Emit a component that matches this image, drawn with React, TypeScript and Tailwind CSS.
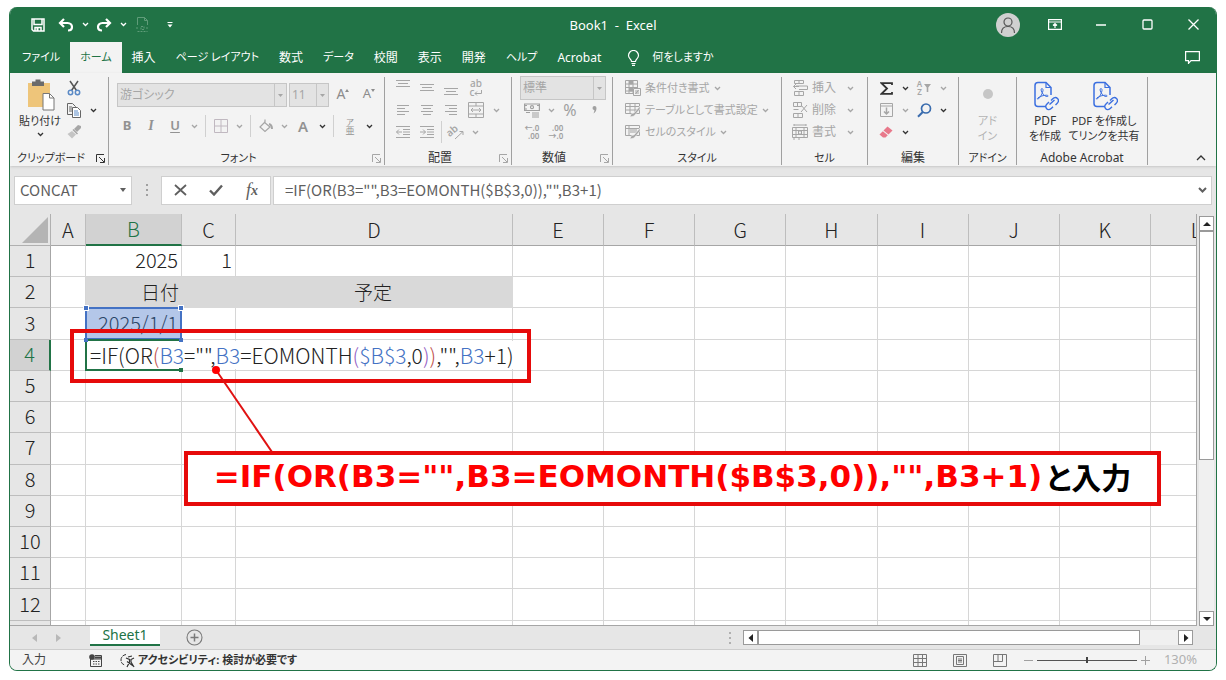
import type { ReactNode } from "react";
import { clsx } from "clsx";

const TABS = [
  { label: "ファイル", kana: true },
  { label: "ホーム", kana: true, active: true },
  { label: "挿入" },
  { label: "ページ レイアウト", kana: true },
  { label: "数式" },
  { label: "データ", kana: true },
  { label: "校閲" },
  { label: "表示" },
  { label: "開発" },
  { label: "ヘルプ", kana: true },
  { label: "Acrobat" },
];
const COLUMNS = ["A", "B", "C", "D", "E", "F", "G", "H", "I", "J", "K", "L"];
const ROWS = ["1", "2", "3", "4", "5", "6", "7", "8", "9", "10", "11", "12", ""];
const FORMULA = '=IF(OR(B3="",B3=EOMONTH($B$3,0)),"",B3+1)';

const CELLS: Record<string, string> = {
  B1: "2025",
  C1: "1",
  B2: "日付",
  D2: "予定",
  B3: "2025/1/1",
};

const FORMULA_PARTS = [
  { text: "=IF(OR", color: "text-[#222]" },
  { text: "(", color: "text-[#c0504d]" },
  { text: "B3", color: "text-[#4472c4]" },
  { text: '="",', color: "text-[#222]" },
  { text: "B3", color: "text-[#4472c4]" },
  { text: "=EOMONTH", color: "text-[#222]" },
  { text: "(", color: "text-[#9460c4]" },
  { text: "$B$3", color: "text-[#4472c4]" },
  { text: ",0", color: "text-[#222]" },
  { text: ")", color: "text-[#9460c4]" },
  { text: ")", color: "text-[#c0504d]" },
  { text: ',"",', color: "text-[#222]" },
  { text: "B3", color: "text-[#4472c4]" },
  { text: "+1)", color: "text-[#222]" },
];

interface IconProps {
  w?: number;
  h?: number;
  sw?: number;
  className?: string;
  children: ReactNode;
}

function Icon({ w = 16, h = 16, sw = 1, className, children }: IconProps) {
  return (
    <svg
      width={w}
      height={h}
      viewBox={`0 0 ${w} ${h}`}
      fill="none"
      stroke="currentColor"
      strokeWidth={sw}
      className={clsx("shrink-0", className)}
      aria-hidden="true"
    >
      {children}
    </svg>
  );
}

function Chevron({ className }: { className?: string }) {
  return (
    <Icon w={7} h={5} sw={1.3} className={className}>
      <path d="M1 1l2.500 2.500L6 1" />
    </Icon>
  );
}

interface ToolProps {
  label: string;
  className?: string;
  children: ReactNode;
}

function Tool({ label, className, children }: ToolProps) {
  return (
    <button type="button" aria-label={label} className={clsx("flex h-[22px] shrink-0 items-center justify-center", className ?? "w-6")}>
      {children}
    </button>
  );
}

function Drop({ label, dark }: { label: string; dark?: boolean }) {
  return (
    <Tool label={label} className="w-3.5">
      <Chevron className={dark ? "text-[#333]" : "text-[#a6a6a6]"} />
    </Tool>
  );
}

function Divider() {
  return <span className="mx-1 h-[22px] w-px shrink-0 bg-[#d0d0d0]" />;
}

interface GroupProps {
  title: string;
  width: string;
  kana?: boolean;
  launcher?: "dark" | "light";
  children: ReactNode;
}

function Group({ title, width, kana, launcher, children }: GroupProps) {
  return (
    <section className={clsx("flex shrink-0 flex-col border-r border-[#a0a0a0]", width)}>
      <div className="flex-1">{children}</div>
      <div className="flex h-[14px] items-center">
        <h2 className={clsx("flex-1 whitespace-nowrap text-center leading-[14px] text-[#333]", kana ? "text-[11px]" : "text-xs")}>{title}</h2>
        {launcher && (
          <button type="button" aria-label={`${title}の設定`} className={clsx("w-4 pl-1", launcher === "dark" ? "text-[#333]" : "text-[#a6a6a6]")}>
            <Icon w={9} h={9}>
              <path d="M.5 8V.5H8M3 3l5 5M8.500 4v4.500H4" />
            </Icon>
          </button>
        )}
      </div>
    </section>
  );
}

interface SelectProps {
  label: string;
  value: string;
  width: string;
}

function RibbonSelect({ label, value, width }: SelectProps) {
  return (
    <div className={clsx("relative h-6 shrink-0 border border-[#c6c6c6] bg-[#e3e3e3]", width)}>
      <select aria-label={label} defaultValue={value} className="block h-full w-full appearance-none pl-0.5 text-xs text-[#a6a6a6]">
        <option>{value}</option>
      </select>
      <span className="pointer-events-none absolute inset-y-0 right-0 flex w-3 items-center justify-center border-l border-[#c6c6c6] text-[#a6a6a6]">
        <Icon w={5} h={3}>
          <path d="M0 0h5L2.500 3z" fill="currentColor" stroke="none" />
        </Icon>
      </span>
    </div>
  );
}

function Lines({ d }: { d: string }) {
  return (
    <Icon>
      <path d={d} />
    </Icon>
  );
}

function TitleBar() {
  return (
    <header className="flex h-[35px] items-center bg-[#217346] text-white">
      <div className="flex flex-1 items-center">
        <Tool label="上書き保存" className="ml-4 w-6">
          <Icon w={14} h={14} sw={1.5}>
            <path d="M1 1h12v12H2.500L1 11.500z" />
            <path d="M3 1v5.500h8V1M4 13V9.500h6V13" />
            <path d="M5.500 10h2v3h-2z" fill="currentColor" stroke="none" />
          </Icon>
        </Tool>
        <Tool label="元に戻す" className="w-8">
          <Icon w={16} h={14} sw={2.2}>
            <path d="M6 1L2 5l4 4M2 5h7.500c3 0 4.500 2 4.500 4s-1.500 3.500-4 3.500" />
          </Icon>
        </Tool>
        <Tool label="元に戻す履歴" className="w-1.5"><Chevron /></Tool>
        <Tool label="やり直し" className="w-8">
          <Icon w={16} h={14} sw={2.2}>
            <path d="M10 1l4 4-4 4M14 5H6.500C3.500 5 2 7 2 9s1.500 3.500 4 3.500" />
          </Icon>
        </Tool>
        <Tool label="やり直し履歴" className="w-1.5"><Chevron /></Tool>
        <Tool label="印刷プレビュー" className="w-8">
          <Icon w={13} h={15} className="text-[#5f9c79]">
            <path d="M1.500 8V.5h7l3 3V8M8.500.5v3h3" />
            <path d="M0 11h3M5 9.500h3v3H5zM10 11h3M1.500 14.500h10" strokeDasharray="2 1" />
          </Icon>
        </Tool>
        <Tool label="ツール バーのカスタマイズ">
          <Icon w={6} h={6}>
            <path d="M.5.5h5" />
            <path d="M.5 2.500h5L3 5.500z" fill="currentColor" stroke="none" />
          </Icon>
        </Tool>
      </div>
      <h1 className="whitespace-pre pt-0.5 text-[13px]">{"Book1  -  Excel"}</h1>
      <div className="flex flex-1 items-center justify-end">
        <button type="button" aria-label="アカウント" className="mr-3 flex size-6 items-center justify-center rounded-full bg-[#d0d0d0] text-[#555]">
          <Icon w={16} h={18} sw={1.2}>
            <circle cx="8" cy="6" r="4" />
            <path d="M1.500 17c0-4 2.500-6.500 6.500-6.500s6.500 2.500 6.500 6.500" />
          </Icon>
        </button>
        <Tool label="リボンの表示オプション" className="w-[46px]">
          <Icon w={14} h={11} sw={1.2}>
            <path d="M.6.6h12.800v9.800H.6zM.6 3h12.800M7 9V4.500M5 6.500l2-2 2 2" />
          </Icon>
        </Tool>
        <Tool label="最小化" className="w-[46px]">
          <Icon w={10} h={2} sw={1.4}><path d="M0 1h10" /></Icon>
        </Tool>
        <Tool label="最大化" className="w-[46px]">
          <Icon w={11} h={11} sw={1.3}><rect x="1" y="1" width="9" height="9" rx="1" /></Icon>
        </Tool>
        <Tool label="閉じる" className="w-[46px]">
          <Icon w={11} h={11} sw={1.3}><path d="M.5.5l10 10M10.500.5l-10 10" /></Icon>
        </Tool>
      </div>
    </header>
  );
}

function TabBar() {
  return (
    <nav className="flex h-[31px] items-stretch bg-[#217346] pl-0.5 text-white">
      {TABS.map(({ label, kana, active }) => (
        <button
          key={label}
          type="button"
          className={clsx("shrink-0 whitespace-nowrap px-2.5", kana ? "text-[11px]" : "text-xs", active && "bg-[#f3f3f3] text-[#217346]")}
        >
          {label}
        </button>
      ))}
      <button type="button" className="ml-4 flex items-center gap-3 whitespace-nowrap text-[11px]">
        <Icon w={13} h={16} sw={1.2}>
          <path d="M4.500 11.500C4.500 9 1.500 8.500 1.500 5.500a5 5 0 0 1 10 0c0 3-3 3.500-3 6zM4.500 13.500h4M5 15.400h3" />
        </Icon>
        何をしますか
      </button>
      <button type="button" aria-label="コメント" className="ml-auto mr-4 flex items-center">
        <Icon w={15} h={13} sw={1.2}>
          <path d="M.6.6h13.800v9H6l-2.500 2.800V9.600H.6z" />
        </Icon>
      </button>
    </nav>
  );
}

function ClipboardGroup() {
  return (
    <Group title="クリップボード" width="w-[99px]" kana launcher="dark">
      <div className="flex pl-2">
        <button type="button" className="flex w-11 flex-col items-center whitespace-nowrap pt-0.5 text-[11px] leading-[15px] text-[#333]">
          <Icon w={30} h={32} className="mb-0.5">
            <path d="M3 4h22v24H3z" fill="#eec57a" stroke="none" />
            <path d="M7 2.500h3.500v-2h5v2H19V7H7z" fill="#6b6b6b" stroke="none" />
            <path d="M18 14.500h6.500l4.500 4.500v12H18z" fill="#fff" stroke="#777" />
            <path d="M24.500 14.500V19H29" stroke="#777" />
          </Icon>
          <span>貼り付け</span>
          <Chevron className="mt-1" />
        </button>
        <div>
          <Tool label="切り取り">
            <Icon w={14} h={16} sw={1.5}>
              <path d="M3 1l6.500 9.500M11 1L4.500 10.500" stroke="#555" />
              <circle cx="3.500" cy="12.500" r="2.200" stroke="#5b8ac6" />
              <circle cx="10.500" cy="12.500" r="2.200" stroke="#5b8ac6" />
            </Icon>
          </Tool>
          <div className="flex">
            <Tool label="コピー">
              <Icon w={15} h={15} className="text-[#666]">
                <path d="M.5.5h5l3 3v8h-8zM2 4h3M2 6h3M2 8h3" />
                <path d="M5.500 4.500h5l3 3v7h-8z" fill="#fff" />
                <path d="M7 8h4M7 10h5M7 12h5" stroke="#5b8ac6" />
              </Icon>
            </Tool>
            <Drop label="コピーのオプション" dark />
          </div>
          <Tool label="書式のコピー/貼り付け">
            <Icon w={15} h={14} className="text-[#a6a6a6]">
              <path d="M14 1l-3-1-4 4 3 3 4-4z" fill="currentColor" stroke="none" />
              <path d="M6 4.500l4.500 4.500" strokeWidth="1.500" />
              <path d="M5 6L.5 9l4.500 4.500L9 9.500z" fill="#c4c4c4" stroke="none" />
            </Icon>
          </Tool>
        </div>
      </div>
    </Group>
  );
}

function FontGroup() {
  return (
    <Group title="フォント" width="w-[276px]" kana launcher="light">
      <div className="flex gap-0.5 pl-2 pt-1.5 text-[#8c8c8c]">
        <RibbonSelect label="フォント" value="游ゴシック" width="w-[170px]" />
        <RibbonSelect label="フォント サイズ" value="11" width="w-10" />
        <Tool label="フォント サイズの拡大">
          <span className="text-sm">A</span>
          <Icon w={4} h={3} className="mb-2"><path d="M0 3h4L2 0z" fill="currentColor" stroke="none" /></Icon>
        </Tool>
        <Tool label="フォント サイズの縮小">
          <span className="text-[13px]">A</span>
          <Icon w={4} h={3} className="mb-2"><path d="M0 0h4L2 3z" fill="currentColor" stroke="none" /></Icon>
        </Tool>
      </div>
      <div className="mt-2 flex pl-1.5 text-[#929292]">
        <Tool label="太字"><b className="text-[13px]">B</b></Tool>
        <Tool label="斜体"><i className="font-['Liberation_Serif',serif] text-sm font-bold">I</i></Tool>
        <Tool label="下線"><u className="text-[13px] font-semibold underline-offset-2">U</u></Tool>
        <Drop label="下線のオプション" />
        <Divider />
        <Tool label="罫線" className="w-[22px]">
          <Icon w={14} h={14} className="text-[#c0b8c0]">
            <path d="M.5.5h13v13H.5zM7 .5v13M.5 7h13" />
          </Icon>
        </Tool>
        <Drop label="罫線のオプション" />
        <Divider />
        <Tool label="塗りつぶしの色" className="w-[22px]">
          <Icon w={14} h={14} sw={1.2} className="text-[#a6a6a6]">
            <path d="M5 3l6 5-5 4.500L1 8l5-5V.6" />
            <path d="M10 5c2 .5 3 2.500 3 5" strokeWidth="2" />
          </Icon>
        </Tool>
        <Drop label="塗りつぶしのオプション" />
        <Tool label="フォントの色"><span className="text-[15px] font-semibold">A</span></Tool>
        <Drop label="フォントの色のオプション" dark />
        <Divider />
        <Tool label="ふりがな">
          <span className="flex flex-col items-center text-[8px] leading-[9px]">
            <span>ア</span>
            <span className="text-[9px]">亜</span>
          </span>
        </Tool>
        <Drop label="ふりがなのオプション" dark />
      </div>
    </Group>
  );
}

function AlignGroup() {
  return (
    <Group title="配置" width="w-[127px]" launcher="light">
      <div className="pl-1.5 text-[#a6a6a6]">
        <div className="flex">
          <Tool label="上揃え"><Lines d="M1 .5h14M3 3.500h10M1 6.500h14" /></Tool>
          <Tool label="上下中央揃え"><Lines d="M1 4.500h14M3 7.500h10M1 10.500h14" /></Tool>
          <Tool label="下揃え"><Lines d="M1 8.500h14M3 11.500h10M1 14.500h14" /></Tool>
          <Tool label="折り返して全体を表示する" className="w-[26px]">
            <span className="flex flex-col text-[10px] font-medium leading-[9px]">
              <span>ab</span>
              <span className="flex items-center">
                c
                <Icon w={8} h={6}><path d="M7.500 0v3.500H1M3 1.500l-2 2 2 2" /></Icon>
              </span>
            </span>
          </Tool>
        </div>
        <div className="flex">
          <Tool label="左揃え"><Lines d="M2 3.500h12M2 6.500h8M2 9.500h12M2 12.500h8" /></Tool>
          <Tool label="中央揃え"><Lines d="M2 3.500h12M4 6.500h8M2 9.500h12M4 12.500h8" /></Tool>
          <Tool label="右揃え"><Lines d="M2 3.500h12M6 6.500h8M2 9.500h12M6 12.500h8" /></Tool>
          <Tool label="セルを結合して中央揃え" className="w-[26px]">
            <Lines d="M.5.5h15v15H.5zM.5 4h15M.5 12h15M8 .5V4M8 12v3.500M3 8h10M5 6L3 8l2 2M11 6l2 2-2 2" />
          </Tool>
          <Drop label="結合のオプション" />
        </div>
        <div className="flex">
          <Tool label="インデントを減らす">
            <Lines d="M1 2.500h14M8 5.500h7M8 8h7M8 10.500h7M1 13.500h14M7 8H1.500M4 5.500L1.500 8 4 10.500" />
          </Tool>
          <Tool label="インデントを増やす">
            <Lines d="M1 2.500h14M8 5.500h7M8 8h7M8 10.500h7M1 13.500h14M1 8h5.500M4 5.500L6.500 8 4 10.500" />
          </Tool>
          <span className="mx-0.5 h-[22px] w-px bg-[#d0d0d0]" />
          <Tool label="方向">
            <svg width="18" height="18" viewBox="0 0 18 18" fill="none" stroke="currentColor" className="overflow-visible" aria-hidden="true">
              <text x="1" y="12" fontSize="10" fontWeight="600" fill="currentColor" stroke="none" transform="rotate(-40 5 11)">ab</text>
              <path d="M8 16l8-7.500M12.500 8.500H16V12" />
            </svg>
          </Tool>
          <Drop label="方向のオプション" />
        </div>
      </div>
    </Group>
  );
}

function NumberGroup() {
  return (
    <Group title="数値" width="w-[101px]" launcher="light">
      <div className="pl-2 text-[#a0a0a0]">
        <div className="flex h-[22px] items-center">
          <RibbonSelect label="表示形式" value="標準" width="w-[86px]" />
        </div>
        <div className="flex">
          <Tool label="通貨表示形式">
            <Icon w={17} h={15} sw={1.2}>
              <path d="M.6 1h14.800v6.500H.6z" />
              <circle cx="8" cy="4.200" r="1.500" />
              <path d="M1 2.500h2M13 2.500h2M1 6h2" />
              <path d="M8 10h7M8 12h7M8 14h7M2 9.500h4" />
            </Icon>
          </Tool>
          <Drop label="通貨のオプション" />
          <Tool label="パーセント スタイル"><span className="text-base">%</span></Tool>
          <Tool label="桁区切りスタイル">
            <Icon w={5} h={8}>
              <path d="M.5 2a2 2 0 1 1 4 0c0 2.500-1 4.500-3 5.500C2 6 2.500 5 2.300 4A2 2 0 0 1 .5 2z" fill="currentColor" stroke="none" />
            </Icon>
          </Tool>
        </div>
        <div className="flex text-[8px] font-semibold leading-[8px]">
          <Tool label="小数点以下の表示桁数を増やす">
            <span className="text-right">←.0<br />.00</span>
          </Tool>
          <Tool label="小数点以下の表示桁数を減らす">
            <span className="text-right">.00<br />→.0</span>
          </Tool>
        </div>
      </div>
    </Group>
  );
}

function StyleTool({ label, icon }: { label: string; icon: ReactNode }) {
  return (
    <button type="button" className="flex h-[22px] items-center gap-1 whitespace-nowrap text-[11px] text-[#a6a6a6]">
      {icon}
      {label}
      <Chevron />
    </button>
  );
}

function StylesGroup() {
  return (
    <Group title="スタイル" width="w-[169px]" kana>
      <div className="pl-3">
        <StyleTool
          label="条件付き書式"
          icon={
            <Icon>
              <path d="M.5.5h12v13H.5zM.5 4h12M.5 7.500h12M.5 11h12M4 .5v13M8 .5v13" />
              <path d="M4.500 1h3v3h-3zM4.500 8h3v3h-3z" fill="currentColor" />
              <path d="M8.500 8.500h7v7h-7z" fill="#f3f3f3" />
              <path d="M10 11h4M10 13h4M13.500 10l-3 4" />
            </Icon>
          }
        />
        <StyleTool
          label="テーブルとして書式設定"
          icon={
            <Icon>
              <path d="M.5 1.500h14v10H.5zM.5 4.500h14M.5 8h14M5 1.500v10M10 1.500v10" />
              <path d="M15 4l-6 7-3 1-1 3 4-1 6-7z" fill="currentColor" stroke="#f3f3f3" strokeWidth=".6" />
            </Icon>
          }
        />
        <StyleTool
          label="セルのスタイル"
          icon={
            <Icon>
              <path d="M.5 1.500h14v10H.5zM.5 4.500h14M4 1.500v10" />
              <path d="M5 5h7v4H5z" fill="#c9c9c9" stroke="none" />
              <path d="M15 4l-6 7-3 1-1 3 4-1 6-7z" fill="currentColor" stroke="#f3f3f3" strokeWidth=".6" />
            </Icon>
          }
        />
      </div>
    </Group>
  );
}

function CellsGroup() {
  return (
    <Group title="セル" width="w-[86px]" kana>
      <div className="w-[72px] pl-2.5 text-[#a6a6a6]">
        {[
          { label: "挿入", d: "M2.500.5h9v3h-9zM7 .5v3M4 6h11.500v3.500H7M4 4L1.500 6.500 4 9M1.500 6.500H7M2.500 11.500h9v4h-9zM7 11.500v4" },
          { label: "削除", d: "M1.500.5h8v4h-8zM5.500.5v4M1.500 7.500h5M1.500 11.500h9v4h-9zM6 11.500v4M9 3l6 7M15 3l-6 7" },
          { label: "書式", d: "M.5 3.500h15v10H.5zM.5 6.500h15M.5 10.500h15M4 3.500v10M12 3.500v10M2 0v2M14 0v2M2 1h12M6.500 7h3v3h-3zM2 14v2M7 14v2" },
        ].map(({ label, d }) => (
          <button key={label} type="button" className="flex h-[22px] w-full items-center gap-1 whitespace-nowrap text-xs">
            <Lines d={d} />
            {label}
            <Chevron className="ml-auto" />
          </button>
        ))}
      </div>
    </Group>
  );
}

function EditGroup() {
  return (
    <Group title="編集" width="w-[91px]">
      <div className="pl-1.5">
        <div className="flex">
          <Tool label="合計">
            <Icon w={13} h={13} sw={1.8} className="text-[#333]"><path d="M12 3V1.200H1.500L7 6.500l-5.500 5.300H12V10" /></Icon>
          </Tool>
          <Drop label="合計のオプション" dark />
          <Tool label="並べ替えとフィルター">
            <span className="flex items-center gap-0.5 text-[#a6a6a6]">
              <span className="text-[8px] font-semibold leading-[8px]">A<br />Z</span>
              <Icon w={7} h={8}><path d="M0 0h7L4.300 3.500V8H2.700V3.500z" fill="currentColor" stroke="none" /></Icon>
            </span>
          </Tool>
          <Drop label="並べ替えのオプション" />
        </div>
        <div className="flex">
          <Tool label="フィル">
            <Icon w={13} h={14} className="text-[#a6a6a6]">
              <path d="M.5.5h12v13H.5zM.5 3h12" />
              <path d="M6.500 4.500V11M4 8.500L6.500 11 9 8.500" strokeWidth="1.500" />
            </Icon>
          </Tool>
          <Drop label="フィルのオプション" />
          <Tool label="検索と選択">
            <Icon w={15} h={15} sw={1.7} className="text-[#3a6cae]">
              <circle cx="9" cy="5.500" r="4.500" />
              <path d="M5.800 9L1 13.800" strokeWidth="2" />
            </Icon>
          </Tool>
          <Drop label="検索のオプション" dark />
        </div>
        <div className="flex">
          <Tool label="クリア">
            <Icon w={14} h={12}>
              <path d="M8.500.5l5 4-4 4-5-4z" fill="#e8788a" stroke="none" />
              <path d="M3.800 5.200l5 4L6.500 11.500H4L.5 8.500z" fill="#e8788a" stroke="none" />
            </Icon>
          </Tool>
          <Drop label="クリアのオプション" dark />
        </div>
      </div>
    </Group>
  );
}

function PdfIcon() {
  return (
    <Icon w={28} h={30} sw={1.5} className="mb-0.5 text-[#3b6fe0]">
      <path d="M14 25.500H7a3 3 0 0 1-3-3v-18a3 3 0 0 1 3-3h8l5 5V14" />
      <path d="M15 1.500v5h5" strokeWidth="1.200" />
      <path d="M11 7.500c-1.200 0-1.200 2 0 4 1.500 2.500 3 4 5.500 4 1 0 1-1.300-1-1.300-3 0-6 1-8.500 2.600-1.200 1-.5 1.800.5 1 2.200-2 4-5.300 4.500-8.300.1-1-.3-2-1-2z" strokeWidth="1" />
      <path d="M18.500 23.500l5-4.500" />
      <path d="M20 19.500l1.500-1.500c1.500-1.500 3.500-2 5-.5s1 3.500-.5 5L24.500 24M18 21l-2 2c-1.500 1.500-1.500 3.500-.3 4.800s3.300 1 4.800-.5l1.500-1.500" strokeWidth="1.400" />
    </Icon>
  );
}

function Ribbon() {
  return (
    <div className="flex h-[93px] bg-[#f3f3f3] pb-px pt-1 shadow-sm">
      <ClipboardGroup />
      <FontGroup />
      <AlignGroup />
      <NumberGroup />
      <StylesGroup />
      <CellsGroup />
      <EditGroup />
      <Group title="アドイン" width="w-[58px]" kana>
        <button type="button" className="mx-auto flex flex-col items-center pt-3 text-[11px] leading-[15px] text-[#b4b4b4]">
          <span className="mb-3.5 size-2.5 rounded-full bg-[#c6c6c6]" />
          <span>アド</span>
          <span>イン</span>
        </button>
      </Group>
      <Group title="Adobe Acrobat" width="w-[131px]">
        <div className="flex gap-1 whitespace-nowrap pl-2.5 pt-1 text-[11px] leading-[15px] text-[#333]">
          <button type="button" className="flex w-9 flex-col items-center">
            <PdfIcon />
            <span className="text-xs leading-[15px]">PDF</span>
            <span>を作成</span>
          </button>
          <button type="button" className="flex w-[74px] flex-col items-center">
            <PdfIcon />
            <span>PDF を作成し</span>
            <span>てリンクを共有</span>
          </button>
        </div>
      </Group>
      <button type="button" aria-label="リボンを折りたたむ" className="ml-auto mr-2.5 self-end pb-1 text-[#333]">
        <Icon w={10} h={6} sw={1.3}><path d="M1 5l4-4 4 4" /></Icon>
      </button>
    </div>
  );
}

function FormulaBar() {
  return (
    <div className="flex h-[48px] items-center pl-1 pr-1 text-[#5f5f5f]">
      <div className="flex h-[29px] w-[118px] items-center border border-[#cfcfcf] bg-white px-[5px]">
        <input aria-label="名前ボックス" defaultValue="CONCAT" className="w-full min-w-0 font-['Noto_Sans_CJK_JP',sans-serif] text-[15px] outline-none" />
        <Icon w={6} h={4}><path d="M0 0h6L3 4z" fill="currentColor" stroke="none" /></Icon>
      </div>
      <span className="flex w-[29px] justify-center">
        <Icon w={2} h={12} sw={2} className="text-[#a0a0a0]"><path d="M1 0v12" strokeDasharray="2 3" /></Icon>
      </span>
      <div className="flex h-[29px] w-[110px] items-center justify-around border border-[#cfcfcf] bg-white">
        <Tool label="キャンセル">
          <Icon w={13} h={12} sw={1.8}><path d="M1 1l11 10M12 1L1 11" /></Icon>
        </Tool>
        <Tool label="入力">
          <Icon w={14} h={12} sw={2.4}><path d="M1 6.500l4 4L13 1.500" /></Icon>
        </Tool>
        <Tool label="関数の挿入">
          <i className="font-['Liberation_Serif',serif] text-lg leading-5">f</i>
          <i className="self-end font-['Liberation_Serif',serif] text-sm font-bold leading-5">x</i>
        </Tool>
      </div>
      <div className="ml-0.5 flex h-[29px] flex-1 items-center border border-[#cfcfcf] bg-white pl-[11px] pr-1">
        <input aria-label="数式バー" defaultValue={FORMULA} className="w-full min-w-0 font-['Noto_Sans_CJK_JP',sans-serif] text-[15px] outline-none" />
        <Icon w={9} h={6} sw={2}><path d="M1 1l3.500 3.500L8 1" /></Icon>
      </div>
    </div>
  );
}

function Cell({ col, row }: { col: string; row: string }) {
  const id = `${col}${row}`;
  const banded = row === "2" && ["B", "C", "D"].includes(col);
  return (
    <td
      className={clsx(
        "relative whitespace-nowrap p-0 pb-0.5 pr-[3px] leading-5",
        banded ? "bg-[#d9d9d9] text-[19px]" : "border-b border-r border-[#d6d6d6]",
        col === "D" ? "text-center" : "text-right",
        id === "B3" && "bg-[#b4c7e9] text-[#2c4668]"
      )}
    >
      {CELLS[id]}
      {id === "B3" && (
        <span className="absolute -inset-px border-2 border-[#4472c4]">
          <span className="absolute -left-1 -top-1 size-1.5 border border-white bg-[#4472c4]" />
          <span className="absolute -right-1 -top-1 size-1.5 border border-white bg-[#4472c4]" />
        </span>
      )}
      {id === "B4" && (
        <>
          <span className="absolute -inset-px z-10 border-2 border-[#217346]" />
          <span className="absolute inset-y-px left-px z-10 flex items-center bg-white px-[3px] text-[21px]">
            {FORMULA_PARTS.map((part, i) => (
              <span key={i} className={part.color}>{part.text}</span>
            ))}
          </span>
          <span className="absolute -left-0.5 -top-0.5 z-10 size-1 bg-[#4472c4]" />
          <span className="absolute -right-0.5 -top-0.5 z-10 size-1 bg-[#4472c4]" />
          <span className="absolute -bottom-0.5 -right-0.5 z-10 size-1 bg-[#217346]" />
        </>
      )}
    </td>
  );
}

function Sheet() {
  return (
    <div className="relative min-w-0 flex-1 overflow-hidden border-b border-[#a6a6a6]">
      <table className="h-[438px] w-[1232px] table-fixed border-separate border-spacing-0 bg-white font-['Noto_Sans_CJK_JP',sans-serif] text-xl font-light text-[#222] [font-feature-settings:normal]">
        <colgroup>
          <col className="w-[41px]" />
          <col className="w-[35px]" />
          <col className="w-[96px]" />
          <col className="w-[54px]" />
          <col className="w-[277px]" />
        </colgroup>
        <thead>
          <tr className="h-8 bg-[#e6e6e6]">
            <th className="border-b border-r border-[#b0b0b0] p-0 pr-0.5 align-bottom">
              <Icon w={26} h={26} className="mb-0.5 ml-auto text-[#b4b4b4]"><path d="M26 0v26H0z" fill="currentColor" stroke="none" /></Icon>
            </th>
            {COLUMNS.map((col) => (
              <th
                key={col}
                className={clsx(
                  "border-r border-[#bdbdbd] p-0 font-light leading-5",
                  col === "B" ? "border-b-2 border-b-[#217346] bg-[#d2d2d2] text-[#217346]" : "border-b border-b-[#a6a6a6]"
                )}
              >
                {col}
              </th>
            ))}
          </tr>
        </thead>
        <tbody>
          {ROWS.map((row) => (
            <tr key={row} className="h-[31px]">
              <th
                className={clsx(
                  "border-b border-[#bdbdbd] p-0 pb-0.5 font-light leading-5",
                  row === "4" ? "border-r-2 border-r-[#217346] bg-[#d2d2d2] text-[#217346]" : "border-r border-r-[#a6a6a6] bg-[#e6e6e6]"
                )}
              >
                {row}
              </th>
              {COLUMNS.map((col) => (
                <Cell key={col} col={col} row={row} />
              ))}
            </tr>
          ))}
        </tbody>
      </table>
      <div className="absolute left-[60px] top-[115px] z-20 h-[54px] w-[461px] border-4 border-[#e60a0a]" />
      <svg width="66" height="92" viewBox="0 0 66 92" className="absolute left-[200px] top-[150px] z-20" aria-hidden="true">
        <path d="M6 6l56 82" stroke="#e01212" strokeWidth="2" />
        <circle cx="6" cy="6" r="4" fill="#f00" />
      </svg>
      <p className="absolute left-[174px] top-[237px] z-20 flex h-[55px] w-[977px] items-center justify-center gap-1 whitespace-nowrap border-4 border-[#e60a0a] bg-white pb-1 font-['Noto_Sans_CJK_JP',sans-serif] text-[30px] font-bold text-black">
        <span className="font-['DejaVu_Sans',sans-serif] text-[31px] text-[#f00]">{FORMULA}</span>
        と入力
      </p>
    </div>
  );
}

function ScrollButton({ label, d }: { label: string; d: string }) {
  return (
    <button type="button" aria-label={label} className="flex size-[15px] shrink-0 items-center justify-center border border-[#9a9a9a] bg-white text-[#222]">
      <Icon w={8} h={8}><path d={d} fill="currentColor" stroke="none" /></Icon>
    </button>
  );
}

function SheetTabs() {
  return (
    <div className="flex h-[23px] items-center pr-[23px]">
      <Tool label="前のシート" className="ml-3 w-6">
        <Icon w={5} h={8} className="text-[#b8b8b8]"><path d="M5 0v8L0 4z" fill="currentColor" stroke="none" /></Icon>
      </Tool>
      <Tool label="次のシート">
        <Icon w={5} h={8} className="text-[#b8b8b8]"><path d="M0 0v8l5-4z" fill="currentColor" stroke="none" /></Icon>
      </Tool>
      <button type="button" className="ml-5 h-5 w-[70px] self-start border-b-2 border-[#217346] bg-white text-sm leading-[18px] text-[#217346]">
        Sheet1
      </button>
      <Tool label="新しいシート" className="ml-[22px] w-6">
        <Icon w={17} h={17} sw={1.1} className="text-[#7a7a7a]">
          <circle cx="8.500" cy="8.500" r="7.500" />
          <path d="M8.500 4.500v8M4.500 8.500h8" strokeWidth="1.500" />
        </Icon>
      </Tool>
      <Icon w={2} h={12} sw={2} className="ml-auto mr-3 text-[#b0b0b0]"><path d="M1 0v12" strokeDasharray="2 3" /></Icon>
      <div className="flex w-[38%] bg-[#f0f0f0]">
        <ScrollButton label="左へスクロール" d="M6 0v8L1.500 4z" />
        <span className="h-[15px] w-[382px] border border-[#9a9a9a] bg-white" />
        <span className="flex-1" />
        <ScrollButton label="右へスクロール" d="M2 0v8l4.500-4z" />
      </div>
    </div>
  );
}

function StatusBar() {
  return (
    <footer className="flex h-[21px] items-center border-t border-[#cdcdcd] bg-[#f3f3f3] pl-3 pr-[19px] text-xs text-[#444]">
      <span className="w-[67px]">入力</span>
      <button type="button" aria-label="マクロの記録">
        <Icon w={13} h={13}>
          <path d="M1.500 4v8.500h11V1.500H6M1.500 5h11" />
          <path d="M4 7.500h1.500M6.500 7.500H8M9 7.500h1.500M4 10h1.500M6.500 10H8M9 10h1.500" />
          <path d="M6 2.500h6v2H6z" fill="currentColor" stroke="none" />
          <circle cx="3" cy="3" r="2.800" fill="currentColor" stroke="none" />
        </Icon>
      </button>
      <button type="button" className="ml-[18px] flex items-center gap-0.5 whitespace-nowrap text-[11px] font-bold text-[#333]">
        <Icon w={16} h={15}>
          <path d="M6 1.500C3 2 1 4.200 1 7s1.500 4.500 4 5" strokeDasharray="4 1" />
          <path d="M6 5l3.500 1.500v2.500L7 14M14 5l-3 1.500v2.500l3 5M7 8.500l7 5M8 4l4-1" strokeWidth="1.200" />
        </Icon>
        アクセシビリティ: 検討が必要です
      </button>
      <div className="ml-auto flex items-center gap-[26px] text-[#777]">
        <button type="button" aria-label="標準"><Icon w={14} h={13}><path d="M.5.5h13v12H.5zM.5 4.500h13M.5 8.500h13M5 .5v12M9.500.5v12" /></Icon></button>
        <button type="button" aria-label="ページ レイアウト"><Icon w={14} h={13}><path d="M.5.5h13v12H.5zM3.500 2.500h7v8h-7zM5 5h4M5 6.500h4M5 8h4" /></Icon></button>
        <button type="button" aria-label="改ページ プレビュー"><Icon w={14} h={13}><path d="M.5.5h13v12H.5zM.5 7.500h9v-7M5 .5v7" /></Icon></button>
      </div>
      <div className="ml-[17px] flex items-center gap-1 text-[#a0a0a0]">
        <button type="button" aria-label="縮小"><Icon w={9} h={9}><path d="M0 4.500h9" /></Icon></button>
        <input
          type="range"
          aria-label="ズーム"
          defaultValue={50}
          className="h-3 w-[100px] appearance-none bg-[linear-gradient(#555,#555)] bg-[length:100%_1px] bg-center bg-no-repeat [&::-webkit-slider-thumb]:h-1.5 [&::-webkit-slider-thumb]:w-0.5 [&::-webkit-slider-thumb]:appearance-none [&::-webkit-slider-thumb]:bg-[#444]"
        />
        <button type="button" aria-label="拡大"><Icon w={9} h={9}><path d="M0 4.500h9M4.500 0v9" /></Icon></button>
      </div>
      <span className="ml-3.5 text-[13px] text-[#b0b0b0]">130%</span>
    </footer>
  );
}

export default function App() {
  return (
    <div className="h-screen bg-white pb-[9px] pl-[9px] pr-[9px] pt-[7px] font-['Noto_Sans','Noto_Sans_CJK_JP',sans-serif] [font-feature-settings:'palt']">
      <main className="flex h-full flex-col overflow-hidden rounded-lg border-x border-b border-[#217346] bg-[#e6e6e6]">
        <TitleBar />
        <TabBar />
        <Ribbon />
        <FormulaBar />
        <div className="flex min-h-0 flex-1">
          <Sheet />
          <div className="flex w-5 flex-col items-center border-l border-[#a6a6a6] pt-0.5">
            <ScrollButton label="上へスクロール" d="M0 6h8L4 2z" />
            <span className="h-[229px] w-[15px] border border-[#9a9a9a] bg-white" />
            <span className="w-[15px] flex-1 bg-[#f0f0f0]" />
            <ScrollButton label="下へスクロール" d="M0 2h8L4 6z" />
          </div>
        </div>
        <SheetTabs />
        <StatusBar />
      </main>
    </div>
  );
}
